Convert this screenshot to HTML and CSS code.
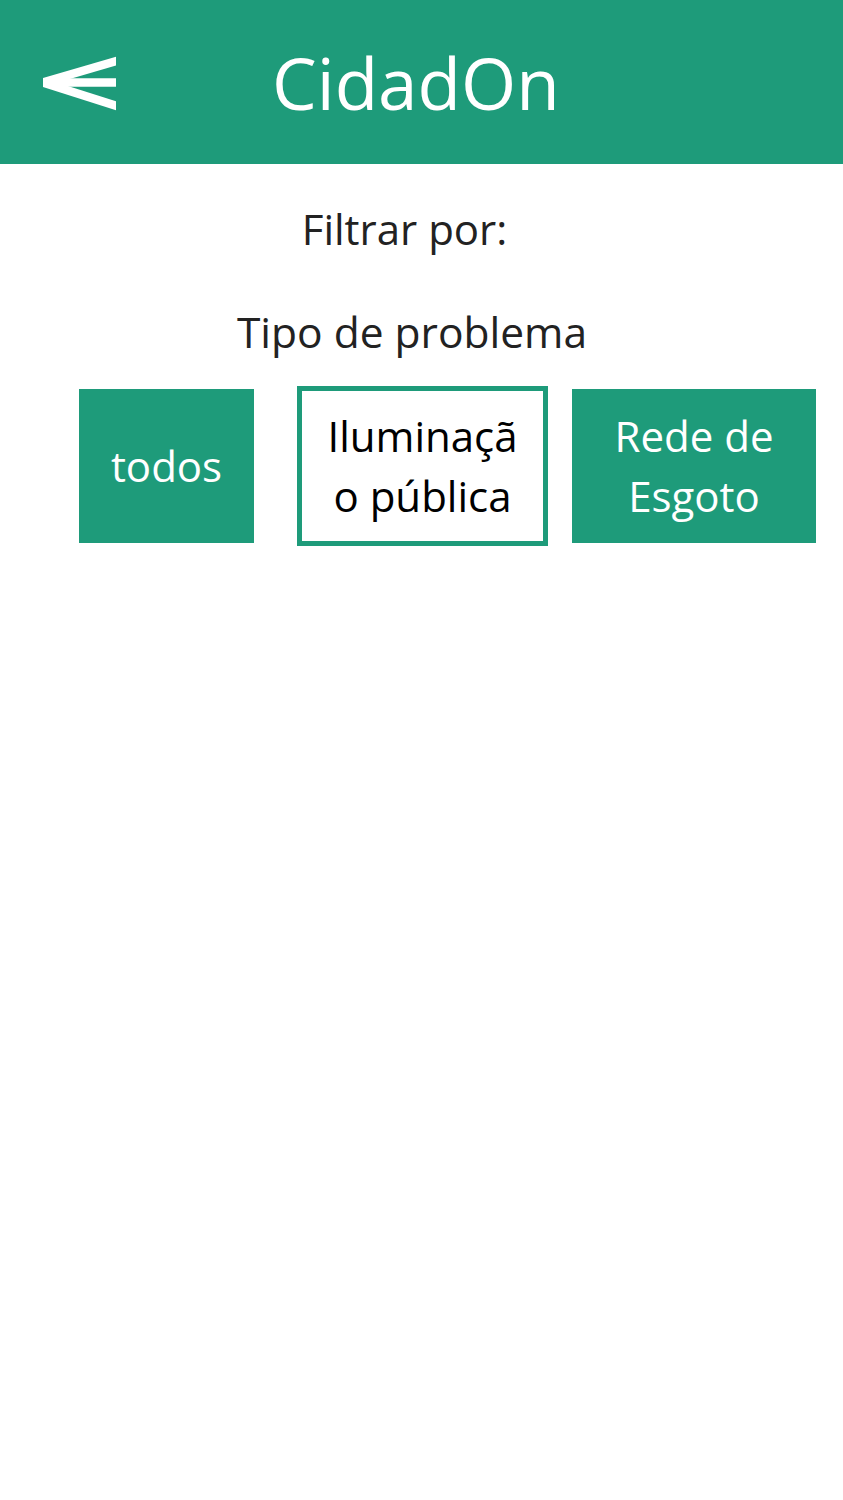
FILE: index.html
```html
<!DOCTYPE html>
<html lang="pt">
<head>
<meta charset="utf-8">
<title>CidadOn</title>
<link rel="stylesheet" href="styles.css">
</head>
<body>
<header class="topbar">
  <svg class="back" width="73" height="64" viewBox="0 0 73 64" aria-label="Voltar">
    <line x1="0" y1="32.5" x2="80" y2="9" />
    <line x1="0" y1="32.5" x2="80" y2="32.5" />
    <line x1="0" y1="32.5" x2="80" y2="58" />
  </svg>
  <h1 class="title">CidadOn</h1>
</header>
<main class="content">
  <p class="label label-filter">Filtrar por:</p>
  <p class="label label-type">Tipo de problema</p>
  <div class="options">
    <button class="opt opt-all">todos</button>
    <button class="opt opt-light">Iluminação pública</button>
    <button class="opt opt-sewer">Rede de Esgoto</button>
  </div>
</main>
</body>
</html>
```
FILE: styles.css
```css
* { box-sizing: border-box; }
html, body { margin: 0; padding: 0; background: #ffffff; }
body { font-family: "Open Sans", "Noto Sans", sans-serif; color: #222222; }

.topbar {
  height: 164px;
  background: #1e9b7a;
  display: flex;
  align-items: center;
  padding-left: 43px;
}
.back { display: block; overflow: hidden; }
.back line { stroke: #ffffff; stroke-width: 8.5; stroke-linecap: butt; }
.title {
  margin: 0 0 0 156px;
  font-weight: 400;
  font-size: 71px;
  line-height: 1;
  color: #ffffff;
}

.content { display: flex; flex-direction: column; }
.label {
  margin: 0;
  font-size: 42px;
  line-height: 60px;
  text-align: center;
}
.label-filter { margin-top: 35px; padding-right: 34px; }
.label-type { margin-top: 43px; padding-right: 19px; font-size: 42.5px; }

.options {
  display: flex;
  align-items: center;
  margin-top: 24px;
  padding-left: 79px;
}
.opt {
  font-family: inherit;
  font-size: 42px;
  line-height: 60px;
  border: 0;
  padding: 0;
  margin: 0;
  background: #1e9b7a;
  color: #ffffff;
  text-align: center;
}
.opt-all { width: 175px; height: 154px; }
.opt-light {
  width: 251px;
  height: 160px;
  margin-left: 43px;
  background: #ffffff;
  color: #000000;
  border: 5px solid #1e9b7a;
  padding: 0 20px;
  word-break: break-all;
}
.opt-sewer { width: 244px; height: 154px; margin-left: 24px; }
```
